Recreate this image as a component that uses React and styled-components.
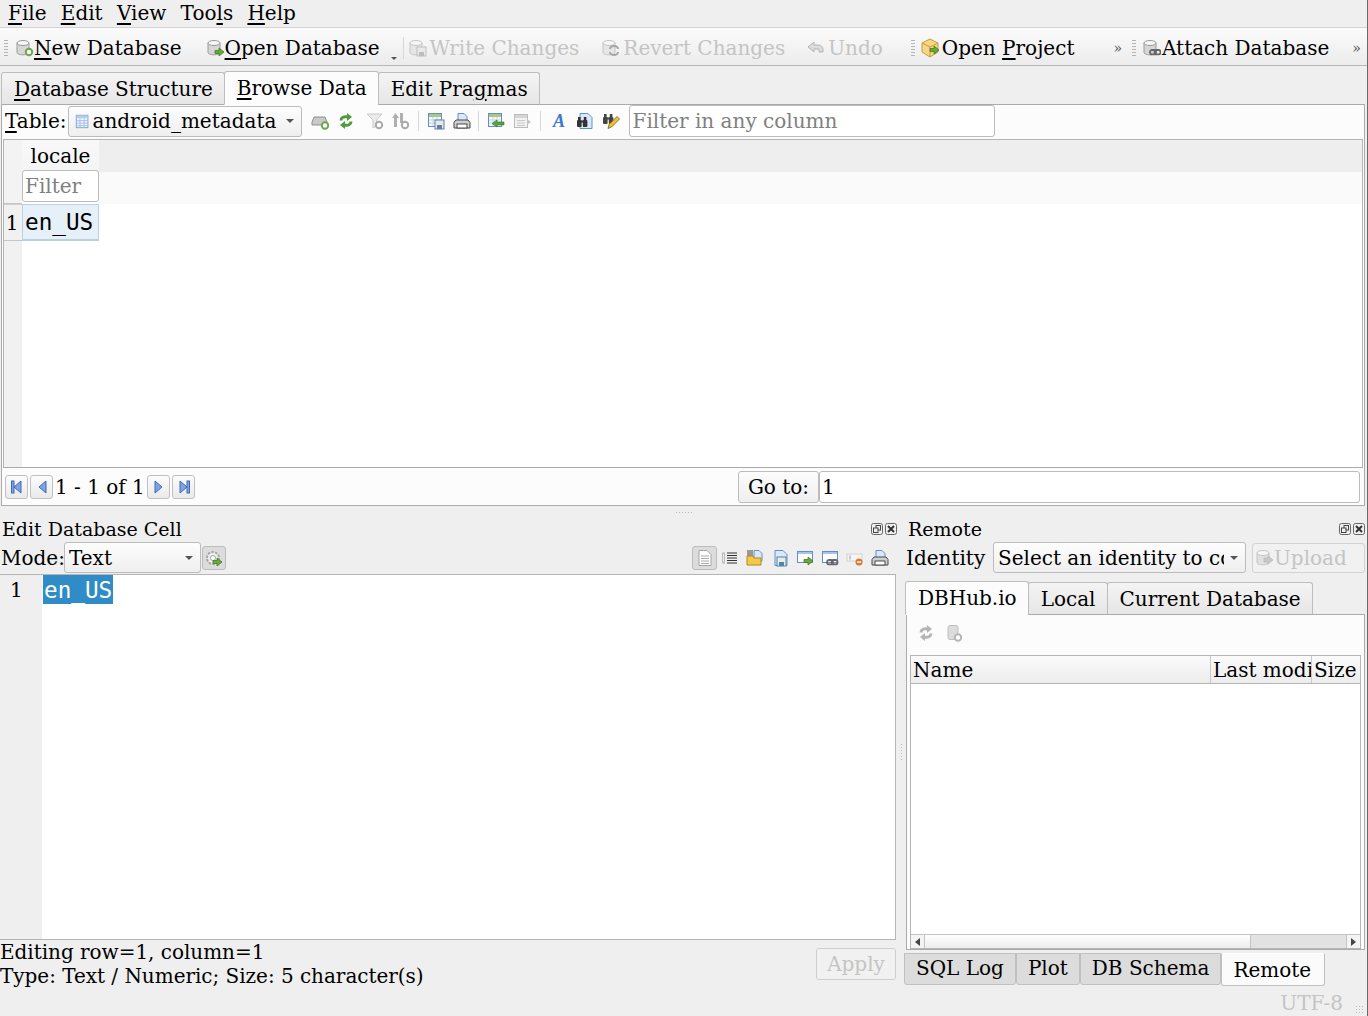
import styled, { createGlobalStyle } from "styled-components";

const GlobalStyle = createGlobalStyle`
  html, body {
    margin: 0;
    padding: 0;
    background: #efefef;
    overflow: hidden;
  }
  * { box-sizing: border-box; }
`;

const Window = styled.div`
  width: 1368px;
  height: 1016px;
  display: flex;
  flex-direction: column;
  overflow: hidden;
  background: #efefef;
  border-right: 1px solid #6a6a6a;
  color: #000;
  font: 20px/24px "DejaVu Serif", serif;
  white-space: nowrap;
`;

const Mn = styled.span`
  text-decoration: underline;
  text-decoration-thickness: 2px;
  text-underline-offset: 3px;
`;

const MenuBar = styled.div`
  height: 28px;
  flex: none;
  display: flex;
  align-items: center;
  padding: 0 0 2px 8px;
  border-bottom: 1px solid #d4d4d4;
  > span { margin-right: 14.25px; }
`;

const MainToolbar = styled.div`
  height: 38px;
  flex: none;
  display: flex;
  align-items: center;
  padding-top: 2px;
  background: linear-gradient(#fbfbfb, #ececec);
  border-bottom: 1px solid #b9b9b9;
`;

const Grip = styled.i`
  width: 4px;
  height: 18px;
  flex: none;
  margin-left: ${(p) => p.$ml || 0}px;
  background: radial-gradient(circle, #b5b5b5 0.7px, transparent 0.8px) 0 0 / 2px 3px;
`;

const ToolButton = styled.div`
  display: flex;
  align-items: center;
  flex: none;
  gap: ${(p) => p.$gap || 0}px;
  margin-left: ${(p) => p.$ml || 0}px;
  color: ${(p) => (p.$off ? "#c4c4c4" : "#000")};
`;

const Chevron = styled.span`
  flex: none;
  font-size: 14px;
  color: #555;
  margin-left: ${(p) => p.$ml || 0}px;
`;

const TinyArrow = styled.i`
  flex: none;
  width: 0;
  height: 0;
  align-self: flex-end;
  margin: 0 0 5px ${(p) => p.$ml || 0}px;
  border: 3px solid transparent;
  border-top: 3px solid #555;
  border-bottom: 0;
`;

const ToolSep = styled.i`
  flex: none;
  width: 1px;
  height: 22px;
  background: #d8d8d8;
  margin-left: ${(p) => p.$ml || 0}px;
`;

const TabRow = styled.div`
  display: flex;
  align-items: flex-end;
  flex: none;
  height: ${(p) => p.$h}px;
  margin: ${(p) => p.$mt || 0}px 0 0 ${(p) => p.$ml || 0}px;
  position: relative;
  z-index: 1;
`;

const Tab = styled.div`
  height: ${(p) => (p.$on ? 34 : 33)}px;
  padding: 0 11px 0 12px;
  display: flex;
  align-items: center;
  border: 1px solid #bdbdbd;
  border-bottom: ${(p) => (p.$on ? "1px solid #fcfcfc" : "1px solid #aaa")};
  border-radius: 3px 3px 0 0;
  margin-right: -1px;
  background: ${(p) => (p.$on ? "#fcfcfc" : "linear-gradient(#f4f4f4, #e6e6e6)")};
  margin-bottom: -1px;
`;

const BrowsePanel = styled.div`
  height: 402px;
  flex: none;
  margin: 0 2px 0 1px;
  border: 1px solid #ababab;
  background: #fcfcfc;
  display: flex;
  flex-direction: column;
`;

const FilterBar = styled.div`
  height: 34px;
  flex: none;
  display: flex;
  align-items: center;
  padding: 0 0 2px 3px;
`;

const Combo = styled.div`
  height: ${(p) => p.$h || 31}px;
  width: ${(p) => p.$w}px;
  flex: none;
  display: flex;
  align-items: center;
  gap: ${(p) => p.$gap || 2}px;
  padding: 0 4px 0 ${(p) => p.$pl || 4}px;
  overflow: hidden;
  border: 1px solid #bcbcbc;
  border-radius: 3px;
  background: linear-gradient(#fdfdfd, #efefef);
`;

const ComboLabel = styled.span`
  flex: 1;
  overflow: hidden;
`;

const ComboArrow = styled.i`
  flex: none;
  width: 0;
  height: 0;
  margin: 0 3px 0 4px;
  border: 4px solid transparent;
  border-top: 4px solid #555;
  border-bottom: 0;
`;

const IconSlot = styled.div`
  width: 26px;
  height: 26px;
  flex: none;
  display: flex;
  align-items: center;
  justify-content: center;
`;

const Gap = styled.i`
  flex: none;
  width: ${(p) => p.$w}px;
  height: 20px;
  display: flex;
  justify-content: center;
  &::after {
    content: "";
    width: ${(p) => (p.$line ? 1 : 0)}px;
    background: #d8d8d8;
  }
`;

const TextInput = styled.div`
  height: ${(p) => p.$h || 32}px;
  width: ${(p) => (p.$w ? `${p.$w}px` : "auto")};
  flex: ${(p) => (p.$w ? "none" : 1)};
  display: flex;
  align-items: center;
  padding-left: 3px;
  border: 1px solid #bcbcbc;
  border-radius: 3px;
  background: #fff;
  color: ${(p) => (p.$hint ? "#808080" : "#000")};
`;

const Grid = styled.div`
  flex: none;
  height: 329px;
  margin: 0 1px 0 1px;
  border: 1px solid #b5b5b5;
  border-bottom-color: #ababab;
  background: #fff;
  display: grid;
  grid-template-columns: 18px 77px 1fr;
  grid-template-rows: 32px 32px 37px 1fr;
`;

const Corner = styled.div`
  background: ${(p) => p.$bg || "#f1f1f1"};
  border-bottom: ${(p) => (p.$line ? "1px solid #c6c6c6" : 0)};
`;

const HeaderCell = styled.div`
  text-align: center;
  line-height: 32px;
  background: linear-gradient(#f8f8f8, #f4f4f4);
`;

const HeaderFill = styled.div`
  background: #eeeeee;
`;

const FilterFill = styled.div`
  background: #fafafa;
`;

const GridFilter = styled(TextInput)`
  margin-top: -2px;
  padding-left: 2px;
  position: relative;
`;

const RowNumber = styled.div`
  background: #f1f1f1;
  border-top: 1px solid #cfcfcf;
  border-bottom: 1px solid #c6c6c6;
  display: flex;
  align-items: center;
  justify-content: center;
  padding-right: 2px;
`;

const SelectedCell = styled.div`
  font: 22.67px/34px "DejaVu Sans Mono", monospace;
  padding-left: 2px;
  background: #e5f0f8;
  border: 1px solid #bcd0e0;
  border-bottom-width: 2px;
`;

const Gutter = styled.div`
  background: #f1f1f1;
`;

const NavBar = styled.div`
  flex: 1;
  display: flex;
  align-items: center;
  padding: 0 3px 0 3px;
`;

const NavButton = styled.div`
  width: 23px;
  height: 24px;
  flex: none;
  margin-right: ${(p) => p.$mr || 0}px;
  display: flex;
  align-items: center;
  justify-content: center;
  border: 1px solid #c0c0c0;
  border-radius: 3px;
  background: linear-gradient(#fcfcfc, #eaeaea);
`;

const PageText = styled.span`
  flex: none;
  margin: 0 3px 0 2px;
  width: 89px;
`;

const GoTo = styled.div`
  flex: none;
  height: 32px;
  width: 81px;
  margin-left: auto;
  display: flex;
  align-items: center;
  justify-content: center;
  border: 1px solid #bcbcbc;
  border-radius: 3px;
  background: linear-gradient(#fcfcfc, #efefef);
`;

const GoInput = styled(TextInput)`
  flex: none;
  width: 541px;
  margin: 0 1px 0 0;
  padding-left: 2px;
`;

const Splitter = styled.div`
  height: 9px;
  flex: none;
  display: flex;
  justify-content: center;
  align-items: center;
  padding-top: 3px;
  &::after {
    content: "";
    width: 16px;
    height: 1px;
    background: repeating-linear-gradient(90deg, #bbb 0 1px, transparent 1px 3px);
  }
`;

const Docks = styled.div`
  flex: none;
  height: 473px;
  display: flex;
`;

const LeftDock = styled.div`
  width: 896px;
  flex: none;
  display: flex;
  flex-direction: column;
`;

const DockSplit = styled.div`
  width: 10px;
  flex: none;
  display: flex;
  align-items: center;
  justify-content: center;
  &::after {
    content: "";
    width: 1px;
    height: 16px;
    background: repeating-linear-gradient(#bbb 0 1px, transparent 1px 3px);
  }
`;

const RightDock = styled.div`
  width: 460px;
  flex: none;
  display: flex;
  flex-direction: column;
`;

const DockTitle = styled.div`
  height: 27px;
  flex: none;
  display: flex;
  align-items: center;
  font-size: 19px;
  padding-left: ${(p) => p.$pl || 0}px;
  justify-content: space-between;
`;

const DockButtons = styled.div`
  display: flex;
  gap: 2px;
  margin-right: ${(p) => p.$mr}px;
`;

const ModeRow = styled.div`
  height: 32px;
  flex: none;
  display: flex;
  align-items: center;
  padding-bottom: 1px;
`;

const ModeLabel = styled.span`
  flex: none;
  width: 64px;
  padding-left: 1px;
`;

const PressedButton = styled.div`
  width: 24px;
  height: 24px;
  flex: none;
  display: flex;
  align-items: center;
  justify-content: center;
  border: 1px solid #bcbcbc;
  border-radius: 3px;
  background: #dcdcdc;
  margin-left: ${(p) => p.$ml || 0}px;
`;

const EditBar = styled.div`
  margin-left: auto;
  margin-right: 4px;
  display: flex;
  align-items: center;
  > div { width: 25px; height: 24px; }
`;

const Editor = styled.div`
  height: 366px;
  flex: none;
  display: flex;
  background: #fff;
  border: 1px solid #b5b5b5;
  border-left: 0;
`;

const LineGutter = styled.div`
  width: 42px;
  flex: none;
  background: #efefef;
  padding: 3px 0 0 10px;
`;

const Highlight = styled.span`
  align-self: flex-start;
  height: 29px;
  overflow: hidden;
  font: 22.67px/31px "DejaVu Sans Mono", monospace;
  padding: 0 1px 0 1px;
  margin-left: 1px;
  color: #fff;
  background: #308cc6;
`;

const InfoRow = styled.div`
  flex: none;
  display: flex;
  justify-content: space-between;
  letter-spacing: -0.03px;
`;

const ApplyButton = styled.div`
  width: 80px;
  height: 32px;
  margin-top: 8px;
  flex: none;
  display: flex;
  align-items: center;
  justify-content: center;
  border: 1px solid #cfcfcf;
  border-radius: 3px;
  color: #c4c4c4;
  background: #f1f1f1;
`;

const IdentityRow = styled.div`
  height: 32px;
  flex: none;
  display: flex;
  align-items: center;
  padding-bottom: 1px;
  margin-bottom: 6px;
`;

const IdentityLabel = styled.span`
  width: 87px;
  flex: none;
`;

const UploadButton = styled.div`
  width: 113px;
  height: 30px;
  margin-left: 6px;
  flex: none;
  display: flex;
  align-items: center;
  padding-left: 3px;
  border: 1px solid #d2d2d2;
  border-radius: 3px;
  color: #c4c4c4;
  background: #f1f1f1;
`;

const RemotePanel = styled.div`
  height: 336px;
  flex: none;
  width: 459px;
  background: #fcfcfc;
  border: 1px solid #ababab;
  display: flex;
  flex-direction: column;
`;

const RemoteIcons = styled.div`
  height: 40px;
  flex: none;
  display: flex;
  align-items: center;
  padding: 0 0 4px 6px;
  gap: 2px;
`;

const RemoteTable = styled.div`
  flex: 1;
  margin: 0 3px 0 3px;
  background: #fff;
  border: 1px solid #b5b5b5;
  border-bottom: 0;
  display: flex;
  flex-direction: column;
`;

const TableHead = styled.div`
  height: 28px;
  flex: none;
  display: grid;
  grid-template-columns: 300px 101px 1fr;
  background: linear-gradient(#fbfbfb, #ececec);
  border-bottom: 1px solid #b5b5b5;
`;

const HeadCell = styled.div`
  padding-left: 2px;
  overflow: hidden;
  line-height: 28px;
  border-right: 1px solid #c9c9c9;
  &:last-child { border-right: 0; }
`;

const TableBody = styled.div`
  flex: 1;
`;

const ScrollBar = styled.div`
  height: 15px;
  flex: none;
  display: flex;
  background: #e2e2e2;
  border-top: 1px solid #c4c4c4;
  border-bottom: 1px solid #b5b5b5;
`;

const ScrollEnd = styled.div`
  width: 14px;
  flex: none;
  margin-left: ${(p) => (p.$side === "left" ? "auto" : 0)};
  background: #f4f4f4;
  display: flex;
  align-items: center;
  justify-content: center;
  border-${(p) => p.$side}: 1px solid #c4c4c4;
`;

const ScrollThumb = styled.div`
  width: 326px;
  flex: none;
  background: linear-gradient(#fff, #ededed);
  border-right: 1px solid #c4c4c4;
`;

const DockTab = styled.div`
  height: ${(p) => (p.$on ? 33 : 32)}px;
  padding: ${(p) => (p.$on ? "0 13px 0 11px" : "0 11px 2px")};
  display: flex;
  align-items: center;
  border: 1px solid #c0c0c0;
  border-top-color: ${(p) => (p.$on ? "#fff" : "#c0c0c0")};
  border-radius: 0 0 3px 3px;
  background: ${(p) => (p.$on ? "#fbfbfb" : "#dcdcdc")};
`;

const BottomTabs = styled.div`
  display: flex;
  align-items: flex-start;
  margin: 3px 0 0 -2px;
`;

const StatusBar = styled.div`
  flex: 1;
  display: flex;
  align-items: center;
  justify-content: flex-end;
  padding: 2px 2px 0 0;
  color: #c4c4c4;
`;

const SizeGrip = styled.i`
  width: 10px;
  height: 10px;
  margin: 14px 0 0 12px;
  background: radial-gradient(circle, #bbb 0.7px, transparent 0.8px) 0 0 / 3px 3px;
`;

// icon parts
const Cyl = ({ c = "#9a9a9a", f = "#d6d6d6" }) => (
  <g>
    <path d="M1 4v9.5c0 1.3 2.5 2.3 6 2.3s6-1 6-2.3V4z" fill={f} stroke={c} />
    <ellipse cx="7" cy="4" rx="6" ry="2.5" fill="#f6f6f6" stroke={c} />
  </g>
);

const Ic = ({ s = 18, children }) => (
  <svg width={s} height={s} viewBox="0 0 18 18" style={{ flex: "none" }}>
    {children}
  </svg>
);

const Plus = ({ x = 13, y = 13, c = "#6aa84f" }) => (
  <circle cx={x} cy={y} r="3.2" fill="#fff" stroke={c} strokeWidth="2" />
);

const GreenArrow = ({ x = 8, y = 9, c = "#6aa73c", e = "#3f7d1f" }) => (
  <path
    transform={`translate(${x} ${y})`}
    d="M0 2.5h4V0l5 4-5 4V5.5H0z"
    fill={c}
    stroke={e}
    strokeWidth="0.8"
  />
);

const Floppy = ({ x = 8, y = 8, c = "#a9a9a9" }) => (
  <g transform={`translate(${x} ${y})`}>
    <rect width="9" height="9" fill="#e9e9e9" stroke={c} />
    <rect x="2" y="5" width="5" height="4" fill={c} />
  </g>
);

const Chain = ({ x = 7, y = 11, c = "#666" }) => (
  <g transform={`translate(${x} ${y})`} fill="none" stroke={c} strokeWidth="1.8">
    <rect x="0" y="0" width="6" height="4.4" rx="2" />
    <rect x="4.5" y="0" width="6" height="4.4" rx="2" />
  </g>
);

const TableIcon = ({ c = "#5f8fd0", h = "#a9c77e" }) => (
  <g>
    <rect x="1.5" y="1.5" width="13" height="13" fill="#f4f7fc" stroke={c} />
    <rect x="2" y="2" width="12" height="3" fill={h} />
    <path d="M2 8h12M2 11h12M6 5v9M10 5v9" stroke="#c3d3ea" />
  </g>
);

const Printer = () => (
  <Ic>
    <path d="M5 1.5h6l3 3V9H5z" fill="#dbe8f8" stroke="#5f8fd0" />
    <path d="M3 8h12l2 2.5V16H1v-5.5z" fill="#cfcfcf" stroke="#4a4a4a" />
    <rect x="4" y="12" width="10" height="4" fill="#fff" stroke="#4a4a4a" />
  </Ic>
);

const Page = ({ c = "#5f8fd0", f = "#dbe8f8" }) => (
  <path d="M4 1.5h8l4 4v11H4z" fill={f} stroke={c} />
);

const Binoculars = ({ x = 1, y = 5, c = "#333" }) => (
  <g transform={`translate(${x} ${y})`} fill={c}>
    <rect x="0" y="3" width="4.6" height="7" rx="1" />
    <rect x="5.8" y="3" width="4.6" height="7" rx="1" />
    <rect x="1" y="0" width="2.6" height="3" />
    <rect x="6.8" y="0" width="2.6" height="3" />
    <rect x="4" y="3.5" width="2.4" height="2" />
  </g>
);

const NewDbIcon = () => (
  <Ic><Cyl /><Plus /></Ic>
);
const OpenDbIcon = () => (
  <Ic><Cyl /><GreenArrow /></Ic>
);
const WriteIcon = () => (
  <Ic><Cyl c="#c4c4c4" f="#e6e6e6" /><Floppy c="#bdbdbd" /></Ic>
);
const RevertIcon = () => (
  <Ic>
    <Cyl c="#c4c4c4" f="#e6e6e6" />
    <path d="M8 10a4 3 0 0 1 8 0M16 13a4 3 0 0 1-8 0" fill="none" stroke="#a5a5a5" strokeWidth="2" />
  </Ic>
);
const UndoIcon = () => (
  <Ic>
    <path d="M1 8l6-5v3h4c3 0 5 2 5 4v3h-4v-3H7v3z" fill="#dcdcdc" stroke="#b5b5b5" />
  </Ic>
);
const ProjectIcon = () => (
  <svg width="20" height="20" viewBox="0 0 20 20" style={{ flex: "none" }}>
    <path d="M9 1l8 4v9l-8 5-8-5V5z" fill="#f7d684" stroke="#c99a3b" />
    <path d="M1 5l8 4 8-4M9 9v10" fill="none" stroke="#c99a3b" />
    <GreenArrow x={9} y={8} />
  </svg>
);
const AttachIcon = () => (
  <Ic><Cyl /><Chain /></Ic>
);
const AddRecordIcon = () => (
  <Ic>
    <path d="M1 10l2-5h11l2 5v3H1z" fill="#c9c9c9" stroke="#8f8f8f" />
    <Plus x={14} y={13.5} />
  </Ic>
);
const RefreshIcon = ({ c = "#4f9a3d" }) => (
  <Ic>
    <path d="M4 8.5C4 5.5 7 4 11 5" fill="none" stroke={c} strokeWidth="3" />
    <path d="M10 1l5 4-5 4z" fill={c} />
    <path d="M14 9.5c0 3-3 4.5-7 3.5" fill="none" stroke={c} strokeWidth="3" />
    <path d="M8 17l-5-4 5-4z" fill={c} />
  </Ic>
);
const FunnelIcon = () => (
  <Ic>
    <path d="M1 2h15l-5.5 6v6L7 16V8z" fill="#ececec" stroke="#c9c9c9" />
    <Plus x={13} y={13} c="#a9a9a9" />
  </Ic>
);
const SortIcon = () => (
  <Ic>
    <path d="M2 15V6H0l3.5-5L7 6H5v9z" fill="#b0b0b0" />
    <path d="M8 1h3v10H8z" fill="#b0b0b0" />
    <Plus x={13} y={13} c="#a9a9a9" />
  </Ic>
);
const SaveTableIcon = () => (
  <Ic><TableIcon /><Floppy x={8} y={8} c="#5f7fa8" /></Ic>
);
const PrevTableIcon = () => (
  <Ic>
    <TableIcon />
    <path d="M17 10h-7V8l-5 3.5 5 3.5v-2h7z" fill="#5aa33c" stroke="#2f7a1a" strokeWidth="0.6" />
  </Ic>
);
const NextTableIcon = () => (
  <Ic>
    <rect x="1.5" y="2.5" width="13" height="13" fill="#f2f2f2" stroke="#bcbcbc" />
    <rect x="2" y="3" width="12" height="3" fill="#d5d5d5" />
    <path d="M4 8.5h8M4 11h8M4 13.5h8" stroke="#c8c8c8" />
    <path d="M14 7l4 3-4 3z" fill="#c4c4c4" />
  </Ic>
);
const FontIcon = () => (
  <Ic>
    <text x="3" y="15" fontFamily="Liberation Serif, serif" fontSize="18" fontStyle="italic" fontWeight="700" fill="#3f74cf">
      A
    </text>
  </Ic>
);
const FindIcon = () => (
  <Ic><Page /><Binoculars /></Ic>
);
const EditFindIcon = () => (
  <Ic>
    <Binoculars x={1} y={2} c="#444" />
    <path d="M6 16.5l1-4 8-8 2.5 2.5-8 8z" fill="#f0bd3d" stroke="#7a5a14" strokeWidth="0.8" />
  </Ic>
);
const TextModeIcon = () => (
  <Ic>
    <path d="M3 1.5h8l4 4v11H3z" fill="#fff" stroke="#a5a5a5" />
    <path d="M5 7h8M5 9.5h8M5 12h8M5 14.5h8" stroke="#a9a9a9" />
  </Ic>
);
const LinesIcon = () => (
  <Ic>
    <rect x="1.5" y="4" width="2" height="10" fill="#ececec" stroke="#bbb" />
    <path d="M6 4h10M6 6.5h10M6 9h10M6 11.5h10M6 14h10" stroke="#333" />
  </Ic>
);
const OpenFileIcon = () => (
  <Ic>
    <path d="M8 1.5h5l3 3V12H8z" fill="#dbe8f8" stroke="#5f8fd0" />
    <rect x="1" y="1" width="6" height="6" fill="#999" />
    <path d="M1 7h6l1 2h7v7H1z" fill="#f3c947" stroke="#b48a1e" />
  </Ic>
);
const SaveFileIcon = () => (
  <Ic><Page /><Floppy x={6} y={8} c="#4d87a0" /></Ic>
);
const WindowIcon = ({ children }) => (
  <Ic>
    <rect x="1.5" y="2.5" width="15" height="11" fill="#fff" stroke="#5f8fd0" />
    <rect x="2" y="3" width="14" height="2" fill="#a8c3e8" />
    {children}
  </Ic>
);
const ClearIcon = () => (
  <Ic>
    <rect x="1" y="5" width="15" height="7" fill="#f5f5f5" stroke="#d0d0d0" />
    <path d="M4 6.5v4" stroke="#999" />
    <circle cx="13" cy="13" r="3.5" fill="#e2752c" />
    <rect x="11" y="12.3" width="4" height="1.5" fill="#fff" />
  </Ic>
);
const CellSettingsIcon = () => (
  <Ic>
    <circle cx="8" cy="9" r="6" fill="#efefef" stroke="#a5a5a5" strokeWidth="2" strokeDasharray="2.5 1.2" />
    <circle cx="8" cy="9" r="2.5" fill="#fff" stroke="#a5a5a5" />
    <GreenArrow x={8} y={9} />
  </Ic>
);
const UploadIcon = () => (
  <Ic>
    <Cyl c="#c4c4c4" f="#e0e0e0" />
    <path d="M8 9h4V7l5 4-5 4v-2H8z" fill="#c9c9c9" stroke="#b0b0b0" strokeWidth="0.6" />
  </Ic>
);
const ServerIcon = () => (
  <Ic>
    <rect x="3" y="1.5" width="10" height="14" rx="2" fill="#dcdcdc" stroke="#c0c0c0" />
    <Plus x={13} y={13.5} c="#b5b5b5" />
  </Ic>
);
const TableComboIcon = () => (
  <Ic s={15}>
    <rect x="1.5" y="1.5" width="14" height="15" fill="#f1f5fc" stroke="#6b97d8" />
    <rect x="2" y="2" width="13" height="3" fill="#b4cbed" />
    <path d="M2 8h13M2 11h13M2 14h13M6 5v11M11 5v11" stroke="#9db9e3" />
  </Ic>
);
const NavIcon = ({ dir, stop }) => (
  <svg width="14" height="16" viewBox="0 0 14 16">
    {dir === "left" ? (
      <>
        <path d="M11 2v12L4 8z" fill="#7fa2e4" stroke="#3f68bd" />
        {stop && <rect x="1.5" y="2" width="2.5" height="12" fill="#7fa2e4" stroke="#3f68bd" />}
      </>
    ) : (
      <>
        <path d="M3 2v12l7-6z" fill="#7fa2e4" stroke="#3f68bd" />
        {stop && <rect x="10" y="2" width="2.5" height="12" fill="#7fa2e4" stroke="#3f68bd" />}
      </>
    )}
  </svg>
);
const FloatIcon = () => (
  <svg width="12" height="12" viewBox="0 0 12 12">
    <rect x="0.5" y="0.5" width="11" height="11" rx="2" fill="none" stroke="#666" />
    <rect x="5" y="2.5" width="4.5" height="4.5" fill="none" stroke="#444" />
    <rect x="2.5" y="5" width="4.5" height="4.5" fill="#efefef" stroke="#444" />
  </svg>
);
const CloseIcon = () => (
  <svg width="12" height="12" viewBox="0 0 12 12">
    <rect x="0.5" y="0.5" width="11" height="11" rx="2" fill="none" stroke="#666" />
    <path d="M3 3l6 6M9 3l-6 6" stroke="#333" strokeWidth="2" />
  </svg>
);

export default function App() {
  return (
    <>
      <GlobalStyle />
      <Window>
        <MenuBar>
          <span><Mn>F</Mn>ile</span>
          <span><Mn>E</Mn>dit</span>
          <span><Mn>V</Mn>iew</span>
          <span>Too<Mn>l</Mn>s</span>
          <span><Mn>H</Mn>elp</span>
        </MenuBar>

        <MainToolbar>
          <Grip $ml={4} />
          <ToolButton $ml={8}><NewDbIcon /><span><Mn>N</Mn>ew Database</span></ToolButton>
          <ToolButton $ml={25}><OpenDbIcon /><span><Mn>O</Mn>pen Database</span></ToolButton>
          <TinyArrow $ml={11} />
          <ToolSep $ml={6} />
          <ToolButton $ml={5} $gap={3} $off><WriteIcon /><span>Write Changes</span></ToolButton>
          <ToolButton $ml={23} $gap={3} $off><RevertIcon /><span>Revert Changes</span></ToolButton>
          <ToolButton $ml={22} $gap={3} $off><UndoIcon /><span>Undo</span></ToolButton>
          <Grip $ml={28} />
          <ToolButton $ml={6} $gap={1}><ProjectIcon /><span>Open <Mn>P</Mn>roject</span></ToolButton>
          <Chevron $ml={39}>»</Chevron>
          <Grip $ml={10} />
          <ToolButton $ml={7} $gap={1}><AttachIcon /><span>Attach Database</span></ToolButton>
          <Chevron $ml={23}>»</Chevron>
        </MainToolbar>

        <TabRow $h={34} $mt={4} $ml={1}>
          <Tab><span><Mn>D</Mn>atabase Structure</span></Tab>
          <Tab $on><span><Mn>B</Mn>rowse Data</span></Tab>
          <Tab><span>Edit Pra<Mn>g</Mn>mas</span></Tab>
        </TabRow>

        <BrowsePanel>
          <FilterBar>
            <span><Mn>T</Mn>able:</span>
            <Gap $w={1} />
            <Combo $w={234} $pl={6} $gap={3}>
              <TableComboIcon />
              <ComboLabel>android_metadata</ComboLabel>
              <ComboArrow />
            </Combo>
            <Gap $w={5} />
            <IconSlot><AddRecordIcon /></IconSlot>
            <IconSlot><RefreshIcon /></IconSlot>
            <Gap $w={3} />
            <IconSlot><FunnelIcon /></IconSlot>
            <IconSlot><SortIcon /></IconSlot>
            <Gap $w={9} $line />
            <IconSlot><SaveTableIcon /></IconSlot>
            <IconSlot><Printer /></IconSlot>
            <Gap $w={8} $line />
            <IconSlot><PrevTableIcon /></IconSlot>
            <IconSlot><NextTableIcon /></IconSlot>
            <Gap $w={11} $line />
            <IconSlot><FontIcon /></IconSlot>
            <IconSlot><FindIcon /></IconSlot>
            <IconSlot><EditFindIcon /></IconSlot>
            <Gap $w={5} />
            <TextInput $w={366} $hint>Filter in any column</TextInput>
          </FilterBar>

          <Grid>
            <Corner $bg="#f3f3f3" />
            <HeaderCell>locale</HeaderCell>
            <HeaderFill />
            <Corner $bg="#f3f3f3" $line />
            <GridFilter $h={32} $hint>Filter</GridFilter>
            <FilterFill />
            <RowNumber>1</RowNumber>
            <SelectedCell>en_US</SelectedCell>
            <div />
            <Gutter />
            <div />
            <div />
          </Grid>

          <NavBar>
            <NavButton $mr={2}><NavIcon dir="left" stop /></NavButton>
            <NavButton><NavIcon dir="left" /></NavButton>
            <PageText>1 - 1 of 1</PageText>
            <NavButton $mr={2}><NavIcon dir="right" /></NavButton>
            <NavButton><NavIcon dir="right" stop /></NavButton>
            <GoTo>Go to:</GoTo>
            <GoInput>1</GoInput>
          </NavBar>
        </BrowsePanel>

        <Splitter />

        <Docks>
          <LeftDock>
            <DockTitle $pl={2}>
              Edit Database Cell
              <DockButtons $mr={-1}><FloatIcon /><CloseIcon /></DockButtons>
            </DockTitle>
            <ModeRow>
              <ModeLabel>Mode:</ModeLabel>
              <Combo $w={137}>
                <ComboLabel>Text</ComboLabel>
                <ComboArrow />
              </Combo>
              <PressedButton $ml={1}><CellSettingsIcon /></PressedButton>
              <EditBar>
                <PressedButton><TextModeIcon /></PressedButton>
                <IconSlot><LinesIcon /></IconSlot>
                <IconSlot><OpenFileIcon /></IconSlot>
                <IconSlot><SaveFileIcon /></IconSlot>
                <IconSlot><WindowIcon><GreenArrow x={8} y={8} /></WindowIcon></IconSlot>
                <IconSlot><WindowIcon><Chain x={6} y={11} /></WindowIcon></IconSlot>
                <IconSlot><ClearIcon /></IconSlot>
                <IconSlot><Printer /></IconSlot>
              </EditBar>
            </ModeRow>
            <Editor>
              <LineGutter>1</LineGutter>
              <Highlight>en_US</Highlight>
            </Editor>
            <InfoRow>
              <div>
                Editing row=1, column=1
                <br />
                Type: Text / Numeric; Size: 5 character(s)
              </div>
              <ApplyButton>Apply</ApplyButton>
            </InfoRow>
          </LeftDock>

          <DockSplit />

          <RightDock>
            <DockTitle $pl={2}>
              Remote
              <DockButtons $mr={1}><FloatIcon /><CloseIcon /></DockButtons>
            </DockTitle>
            <IdentityRow>
              <IdentityLabel>Identity</IdentityLabel>
              <Combo $w={253}>
                <ComboLabel>Select an identity to connect</ComboLabel>
                <ComboArrow />
              </Combo>
              <UploadButton><UploadIcon /><span>Upload</span></UploadButton>
            </IdentityRow>
            <TabRow $h={34} $ml={-1}>
              <Tab $on>DBHub.io</Tab>
              <Tab>Local</Tab>
              <Tab>Current Database</Tab>
            </TabRow>
            <RemotePanel>
              <RemoteIcons>
                <IconSlot><RefreshIcon c="#b5b5b5" /></IconSlot>
                <IconSlot><ServerIcon /></IconSlot>
              </RemoteIcons>
              <RemoteTable>
                <TableHead>
                  <HeadCell>Name</HeadCell>
                  <HeadCell>Last modi</HeadCell>
                  <HeadCell>Size</HeadCell>
                </TableHead>
                <TableBody />
                <ScrollBar>
                  <ScrollEnd $side="right">
                    <svg width="6" height="8"><path d="M5 0v8L0 4z" fill="#444" /></svg>
                  </ScrollEnd>
                  <ScrollThumb />
                  <ScrollEnd $side="left">
                    <svg width="6" height="8"><path d="M0 0v8l5-4z" fill="#444" /></svg>
                  </ScrollEnd>
                </ScrollBar>
              </RemoteTable>
            </RemotePanel>
            <BottomTabs>
              <DockTab>SQL Log</DockTab>
              <DockTab>Plot</DockTab>
              <DockTab>DB Schema</DockTab>
              <DockTab $on>Remote</DockTab>
            </BottomTabs>
          </RightDock>
        </Docks>

        <StatusBar>
          UTF-8
          <SizeGrip />
        </StatusBar>
      </Window>
    </>
  );
}
